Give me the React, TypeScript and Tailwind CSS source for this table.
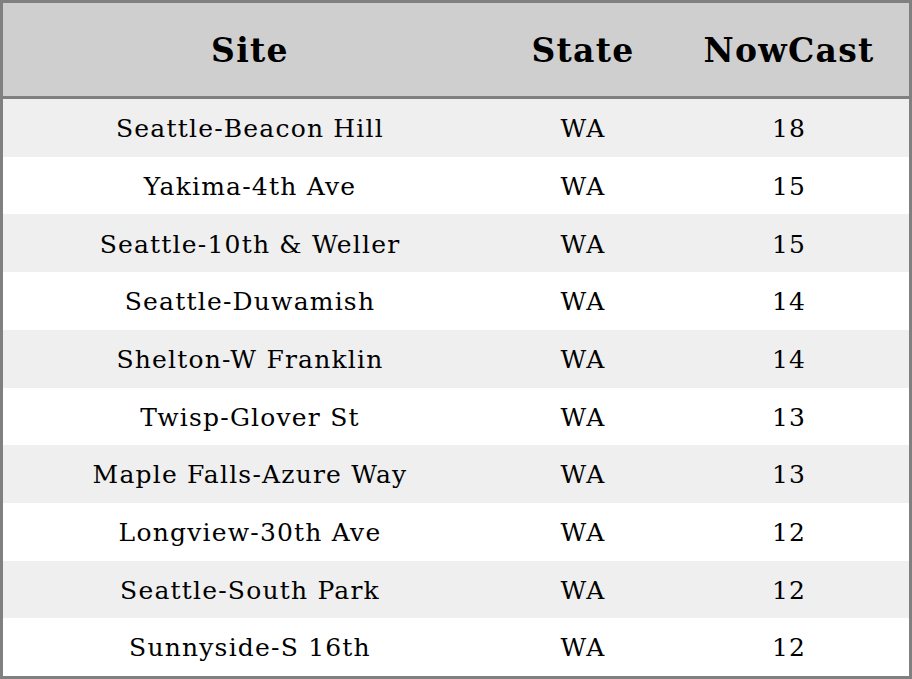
import React from "react";

const rows: [string, string, string][] = [
  ["Seattle-Beacon Hill", "WA", "18"],
  ["Yakima-4th Ave", "WA", "15"],
  ["Seattle-10th & Weller", "WA", "15"],
  ["Seattle-Duwamish", "WA", "14"],
  ["Shelton-W Franklin", "WA", "14"],
  ["Twisp-Glover St", "WA", "13"],
  ["Maple Falls-Azure Way", "WA", "13"],
  ["Longview-30th Ave", "WA", "12"],
  ["Seattle-South Park", "WA", "12"],
  ["Sunnyside-S 16th", "WA", "12"],
];

export default function App() {
  return (
    <div
      className="w-[912px] h-[679px] border-[3px] border-[#808080] flex flex-col text-black"
      style={{ fontFamily: '"DejaVu Serif", serif' }}
    >
      <div className="h-[96px] shrink-0 grid grid-cols-[494px_172px_1fr] items-center pt-[2px] bg-[#cfcfcf] border-b-[3px] border-[#808080] text-[33px] font-bold tracking-[1.3px]">
        <div className="text-center">Site</div>
        <div className="text-center">State</div>
        <div className="text-center">NowCast</div>
      </div>
      <div className="flex-1 flex flex-col">
        {rows.map((r, i) => (
          <div
            key={i}
            className={`flex-1 grid grid-cols-[494px_172px_1fr] items-center pt-[2px] text-[25px] tracking-[1.2px] ${
              i % 2 === 0 ? "bg-[#efefef]" : "bg-white"
            }`}
          >
            <div className="text-center">{r[0]}</div>
            <div className="text-center">{r[1]}</div>
            <div className="text-center">{r[2]}</div>
          </div>
        ))}
      </div>
    </div>
  );
}
